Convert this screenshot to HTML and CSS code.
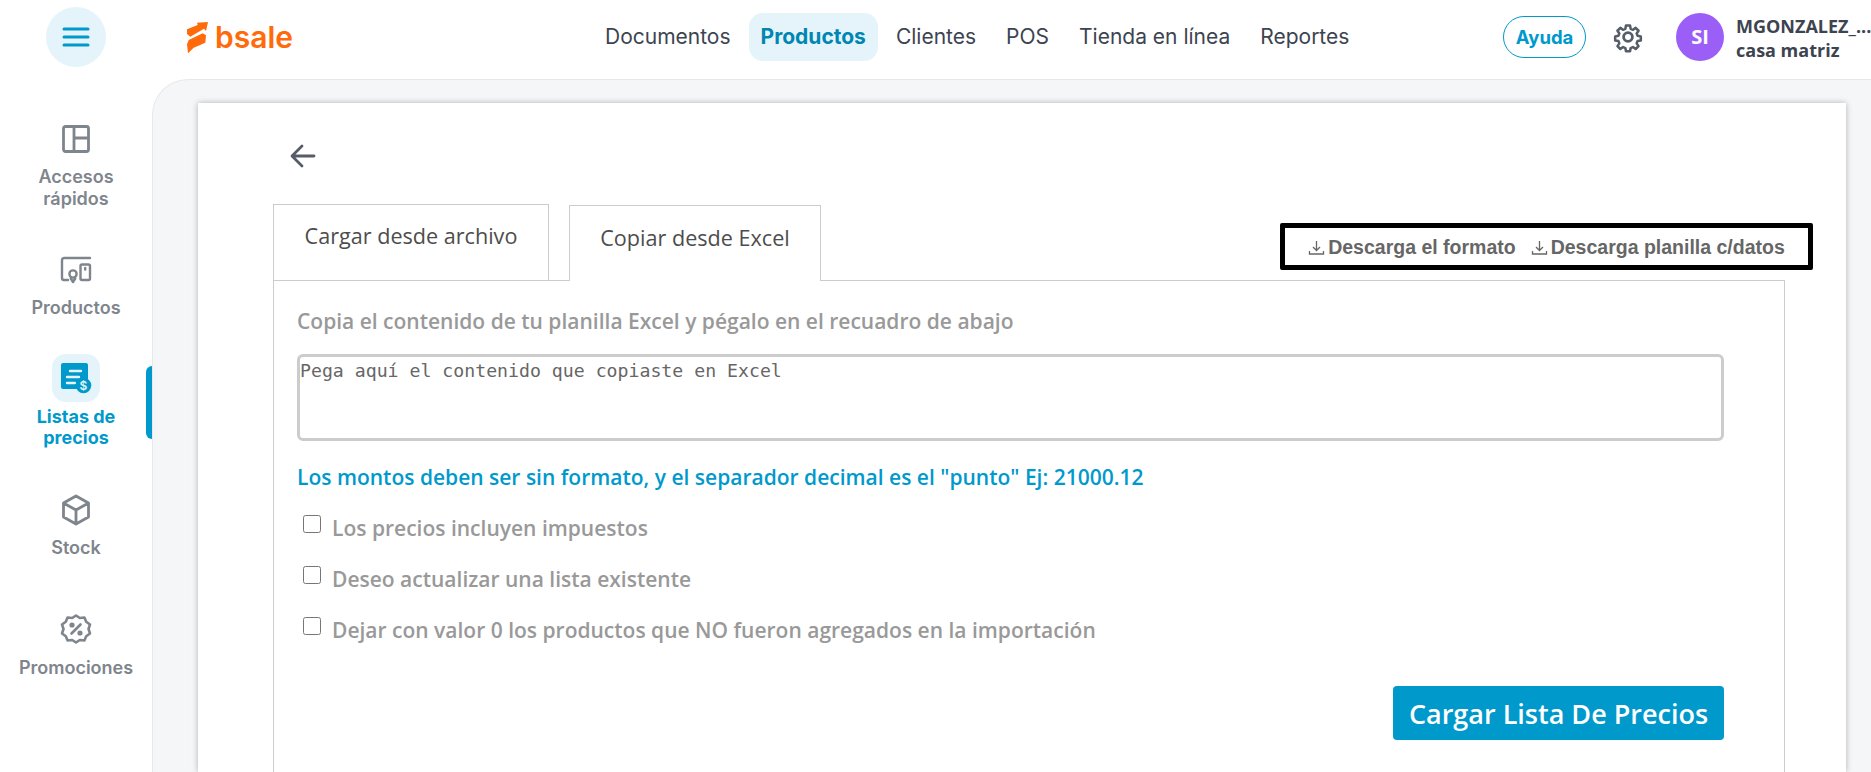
FILE: index.html
```html
<!DOCTYPE html>
<html lang="es">
<head>
<meta charset="utf-8">
<title>Bsale - Listas de precios</title>
<link rel="stylesheet" href="styles.css">
</head>
<body>
<header class="topbar">
  <div class="menu-cell">
    <button class="menu-btn" aria-label="Menú">
      <svg width="28" height="20" viewBox="0 0 28 20"><path d="M2 2h24M2 10h24M2 18h24" stroke="#0099cc" stroke-width="3" stroke-linecap="round" fill="none"/></svg>
    </button>
  </div>
  <div class="logo">
    <svg class="logo-mark" width="22" height="33" viewBox="0 0 22 33"><path fill="#ff6b0a" d="M0 8.300 10.700 4 10 1.700 21 1 19 10 17 7.700 3.300 15.700 0 13ZM1.700 19 15.700 12.300 19 14.300 18.300 21.700 6.700 26.700 1 32.300 0 23.300Z"/></svg>
    <span class="logo-text">bsale</span>
  </div>
  <nav class="mainnav">
    <a class="navlink">Documentos</a>
    <a class="navlink active">Productos</a>
    <a class="navlink">Clientes</a>
    <a class="navlink">POS</a>
    <a class="navlink">Tienda en línea</a>
    <a class="navlink">Reportes</a>
  </nav>
  <div class="userbar">
    <button class="help">Ayuda</button>
    <svg class="gear" width="32" height="32" viewBox="0 0 24 24" fill="none" stroke="#565d68" stroke-width="2.100" stroke-linejoin="round"><path d="M10.300 2.500h3.400l.5 2.700 1.900.8 2.300-1.600 2.400 2.400-1.600 2.300.8 1.900 2.700.5v3.400l-2.700.5-.8 1.900 1.600 2.300-2.400 2.400-2.300-1.600-1.900.8-.5 2.700h-3.400l-.5-2.700-1.900-.8-2.300 1.600-2.400-2.400 1.600-2.300-.8-1.900-2.700-.5v-3.400l2.700-.5.8-1.900-1.600-2.300 2.400-2.400 2.300 1.600 1.900-.8z" transform="translate(1.200 1.200) scale(.9)"/><circle cx="12" cy="12" r="3.300"/></svg>
    <div class="avatar">SI</div>
    <div class="who">
      <div class="who-name">MGONZALEZ_...</div>
      <div>casa matriz</div>
    </div>
  </div>
</header>

<div class="shell">
  <aside class="sidebar">
    <a class="side-item">
      <span class="side-icon"><svg width="30" height="30" viewBox="0 0 30 30" fill="none" stroke="#7f858d" stroke-width="2.800" stroke-linejoin="round"><rect x="2.500" y="2.500" width="25" height="25" rx="2"/><path d="M13 2.500v25M13 14h14.500"/></svg></span>
      <span class="side-label">Accesos<br>rápidos</span>
    </a>
    <a class="side-item">
      <span class="side-icon"><svg width="32" height="28" viewBox="0 0 32 28" fill="none" stroke="#7f858d" stroke-width="2.400" stroke-linejoin="round" stroke-linecap="round"><path d="M30 2H4.500Q2 2 2 4.500V22q0 2 2 2h4"/><rect x="20.500" y="8.500" width="9.500" height="15.500" rx="1.500"/><circle cx="13" cy="18" r="3.600"/><path d="M10.800 22.500 13 26l2.200-3.500M25.200 12v1.500"/></svg></span>
      <span class="side-label">Productos</span>
    </a>
    <a class="side-item selected">
      <span class="side-icon tile"><svg width="32" height="32" viewBox="0 0 32 32"><path fill="#0099cc" d="M3 1h23q2 0 2 2v15a8 8 0 0 0-9 9H3q-2 0-2-2V3q0-2 2-2z"/><path stroke="#e5f4fa" stroke-width="2.400" stroke-linecap="round" d="M10 9h11M7 15h12M7 21h8"/><circle cx="23.500" cy="23.500" r="7.800" fill="#0099cc"/><text class="dollar" x="23.500" y="28">$</text></svg></span>
      <span class="side-label">Listas de<br>precios</span>
      <span class="marker"></span>
    </a>
    <a class="side-item">
      <span class="side-icon"><svg width="30" height="32" viewBox="0 0 30 32" fill="none" stroke="#7f858d" stroke-width="2.800" stroke-linejoin="round"><path d="M15 2 27.500 9v14L15 30 2.500 23V9zM2.500 9 15 16l12.500-7M15 16v14"/></svg></span>
      <span class="side-label">Stock</span>
    </a>
    <a class="side-item">
      <span class="side-icon"><svg width="32" height="32" viewBox="0 0 32 32" fill="none" stroke="#7f858d" stroke-width="2.600" stroke-linejoin="round"><path d="M16 2.500 19.800 5 24.400 4.500 26.200 8.800 30 11.500 28.500 16 30 20.500 26.200 23.200 24.400 27.500 19.800 27 16 29.500 12.200 27 7.600 27.500 5.800 23.200 2 20.500 3.500 16 2 11.500 5.800 8.800 7.600 4.500 12.200 5z"/><path d="M20.500 11.500 11.500 20.500" stroke-linecap="round"/><circle cx="12" cy="12" r="1.300" fill="#7f858d"/><circle cx="20" cy="20" r="1.300" fill="#7f858d"/></svg></span>
      <span class="side-label">Promociones</span>
    </a>
  </aside>

  <main class="panel">
    <section class="card">
      <svg class="back" width="26" height="24" viewBox="0 0 26 24" fill="none" stroke="#565d68" stroke-width="2.800" stroke-linecap="round" stroke-linejoin="round"><path d="M24 12H2.500M12 2 2 12l10 10"/></svg>

      <div class="tabrow">
        <div class="tabs">
          <div class="tab">Cargar desde archivo</div>
          <div class="tab current">Copiar desde Excel</div>
        </div>
        <div class="downloads">
          <a class="dl"><svg width="17" height="17" viewBox="0 0 16 17" fill="none" stroke="#666" stroke-width="1.300"><path d="M8 2v9.500M4.500 8 8 11.500 11.500 8M1 12v3h14v-3"/></svg>Descarga el formato</a>
          <a class="dl"><svg width="17" height="17" viewBox="0 0 16 17" fill="none" stroke="#666" stroke-width="1.300"><path d="M8 2v9.500M4.500 8 8 11.500 11.500 8M1 12v3h14v-3"/></svg>Descarga planilla c/datos</a>
        </div>
      </div>

      <div class="tabbody">
        <p class="hint">Copia el contenido de tu planilla Excel y pégalo en el recuadro de abajo</p>
        <textarea class="paste" placeholder="Pega aquí el contenido que copiaste en Excel"></textarea>
        <p class="note">Los montos deben ser sin formato, y el separador decimal es el "punto" Ej: 21000.12</p>
        <label class="check"><input type="checkbox"><span>Los precios incluyen impuestos</span></label>
        <label class="check"><input type="checkbox"><span>Deseo actualizar una lista existente</span></label>
        <label class="check"><input type="checkbox"><span>Dejar con valor 0 los productos que NO fueron agregados en la importación</span></label>
        <div class="actions"><button class="submit">Cargar Lista De Precios</button></div>
      </div>
    </section>
  </main>
</div>
</body>
</html>
```

FILE: styles.css
```css
* { box-sizing: border-box; }
html, body { margin: 0; height: 772px; overflow: hidden; background: #fff; }
body { font-family: "Open Sans", sans-serif; display: flex; flex-direction: column; }
a { display: block; }
button { font: inherit; border: 0; padding: 0; }

.topbar { height: 79px; flex: none; display: flex; align-items: center; padding-bottom: 5px; }
.menu-cell { width: 152px; flex: none; display: flex; justify-content: center; }
.menu-btn { width: 60px; height: 60px; border-radius: 50%; background: #e5f4fa; display: flex; align-items: center; justify-content: center; }
.logo { margin-left: 35px; width: 200px; flex: none; display: flex; align-items: center; gap: 6px; }
.logo-text { font-family: Inter, sans-serif; font-weight: 600; font-size: 30px; line-height: 36px; color: #ff6b0a; }

.mainnav { margin-left: 206px; display: flex; align-items: center; gap: 6px; font-family: Inter, sans-serif; font-size: 21px; color: #3d4450; }
.navlink { padding: 0 12px; height: 48px; line-height: 48px; border-radius: 14px; }
.navlink.active { background: #e5f4fa; color: #0086b3; font-weight: 700; }

.userbar { margin-left: auto; width: 368px; flex: none; display: flex; align-items: center; }
.help { flex: none; width: 83px; height: 42px; border: 1px solid #0099cc; border-radius: 21px; background: #fff; color: #0099cc; font-family: Inter, sans-serif; font-weight: 700; font-size: 18.500px; }
.gear { flex: none; margin-left: 26px; }
.avatar { flex: none; margin-left: 32px; width: 48px; height: 48px; border-radius: 50%; background: #9b5ff8; color: #fff; font-weight: 700; font-size: 20px; text-align: center; line-height: 48px; }
.who { flex: none; margin-left: 12px; padding-top: 2px; font-weight: 700; font-size: 18px; line-height: 24px; color: #3d4450; white-space: nowrap; }
.who-name { font-size: 18px; letter-spacing: 0; }

.shell { flex: 1; min-height: 0; display: flex; }
.sidebar { width: 152px; flex: none; padding-top: 41px; font-family: Inter, sans-serif; }
.side-item { position: relative; display: flex; flex-direction: column; align-items: center; text-align: center; color: #7f858d; font-weight: 600; font-size: 18px; line-height: 21.500px; }
.side-item:nth-child(1) { margin-bottom: 41px; }
.side-item:nth-child(2) { margin-bottom: 35px; }
.side-item:nth-child(3) { margin-bottom: 41px; }
.side-item:nth-child(4) { margin-bottom: 51px; }
.side-icon { height: 38px; display: flex; align-items: center; justify-content: center; margin-bottom: 9px; }
.side-item:not(:first-child) .side-icon:not(.tile) svg { margin-top: 2px; }
.side-item:nth-child(1) .side-icon { margin-bottom: 8px; }
.side-item:nth-child(5) .side-icon { margin-bottom: 10px; }
.side-icon.tile { width: 48px; height: 48px; border-radius: 14px; background: #e5f4fa; margin-bottom: 4px; }
.selected { color: #0099cc; font-weight: 700; }
.marker { position: absolute; right: 0; top: 12px; width: 6px; height: 73px; background: #0099cc; border-radius: 6px 0 0 6px; }
.dollar { font-family: Inter, sans-serif; font-size: 12px; font-weight: 600; fill: #e5f4fa; text-anchor: middle; }

.panel { flex: 1; min-width: 0; background: #f5f6f8; border: 1px solid #e6e8ea; border-right: 0; border-bottom: 0; border-top-left-radius: 36px; padding: 23px 25px 0 45px; }
.card { height: 100%; background: #fff; box-shadow: 0 0 6px rgba(0, 0, 0, .28); padding: 41px 61px 0 75px; }
.back { display: block; margin: 0 0 36px 17px; }

.tabrow { display: flex; justify-content: space-between; align-items: flex-start; }
.tabs { display: flex; gap: 20px; }
.tab { width: 276px; height: 76px; padding-top: 16px; border: 1px solid #ccc; border-bottom: 0; text-align: center; font-size: 21.600px; font-weight: 500; color: #4d4d4d; }
.tab.current { width: 252px; height: 76px; margin-top: 1px; padding-top: 17px; background: #fff; position: relative; z-index: 1; margin-bottom: -1px; }
.downloads { width: 533px; height: 47px; margin: 19px -28px 0 0; padding-top: 2px; border: 5px solid #000; border-radius: 2px; display: flex; align-items: center; justify-content: center; gap: 15px; font-family: "Liberation Sans", sans-serif; font-weight: 700; font-size: 19.500px; color: #666; }
.dl { display: flex; align-items: center; gap: 3px; }

.tabbody { height: 500px; border: 1px solid #ccc; padding: 27px 23px; }
.hint { margin: 0 0 19px; font-size: 21px; font-weight: 600; line-height: 27px; color: #999; }
.paste { display: block; width: 1427px; height: 87px; border: 3px solid #ccc; border-radius: 6px; padding: 3px 0; font-family: "DejaVu Sans Mono", monospace; font-size: 18.200px; line-height: 22px; resize: none; outline: 0; }
.paste::placeholder { color: #666; opacity: 1; }
.note { margin: 23px 0 24px; font-size: 21px; font-weight: 600; line-height: 27px; color: #0099cc; }
.check { display: flex; align-items: flex-start; height: 27px; margin: 0 0 24px 6px; font-size: 21px; font-weight: 600; line-height: 27px; color: #999; }
.check input { width: 18px; height: 18px; margin: 0 11px 0 0; flex: none; }
.actions { display: flex; justify-content: flex-end; margin-top: 42px; width: 1427px; }
.submit { width: 331px; height: 54px; background: #0099cc; color: #fff; border-radius: 4px; font-size: 27px; font-weight: 600; }
```
